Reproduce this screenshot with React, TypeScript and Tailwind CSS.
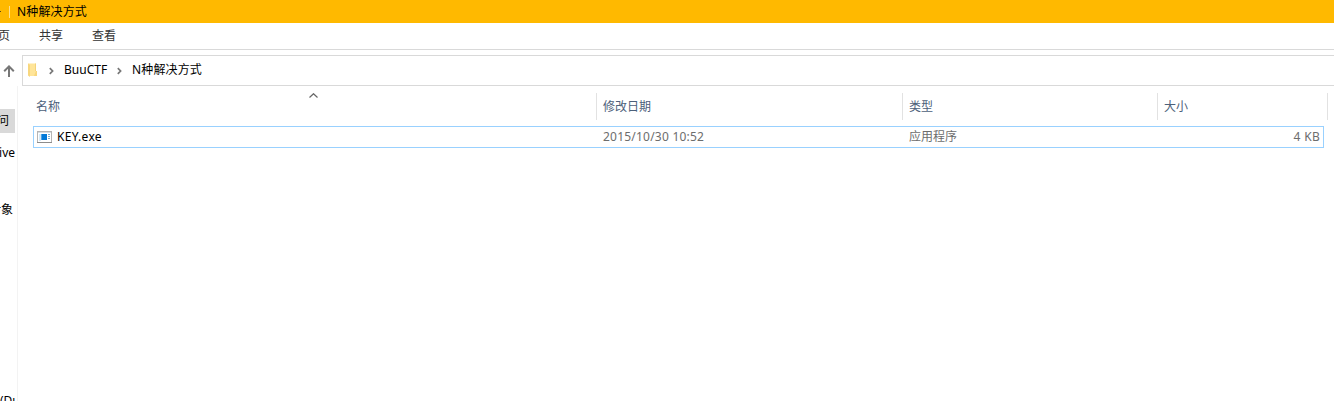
import React from 'react';

function Crumb() {
  return (
    <svg width="5" height="8" viewBox="0 0 5 8" className="shrink-0" fill="none" stroke="#777" strokeWidth="1.7">
      <path d="M0.8 1.2 L3.6 4 L0.8 6.8" />
    </svg>
  );
}

function TitleBar() {
  return (
    <header className="flex h-[23px] items-center bg-[#ffb900]">
      <div className="h-px w-px bg-[#5e4a13]" />
      <div className="ml-2 h-3 w-px bg-[#ffdf8c]" />
      <span className="ml-[7px] leading-[23px] tracking-[0.15px]">N种解决方式</span>
    </header>
  );
}

function Ribbon() {
  return (
    <nav className="flex h-[27px] border-b border-[#d9d9d9] leading-[25px] text-[#333]">
      <span className="-ml-[2px] w-[41px]">页</span>
      <span className="w-[53px]">共享</span>
      <span>查看</span>
    </nav>
  );
}

function AddressBar() {
  return (
    <div className="flex h-9 pt-[5px]">
      <div className="flex w-[22px] shrink-0 items-center pl-[3px]">
        <svg width="12" height="12" viewBox="0 0 12 12" fill="none" stroke="#777" strokeWidth="2">
          <path d="M6 12V1.5M1.2 6.2L6 1.4L10.8 6.2" />
        </svg>
      </div>
      <div className="flex h-[31px] flex-1 items-center border border-r-0 border-[#d9d9d9] pl-[5px]">
        <svg width="10" height="14" viewBox="0 0 10 14" className="mb-px shrink-0">
          <path d="M0 0.5H8V8H9V13H2L0 12Z" fill="#ffe599" />
          <path d="M0 0.5L2 2V14L0 12.5Z" fill="#f8d77e" />
          <path d="M7 0.5H8V8H7Z" fill="#f3d37c" />
          <path d="M8 8H9V13H6Z" fill="#f8d77e" />
        </svg>
        <span className="ml-[11px] flex"><Crumb /></span>
        <span className="mb-px ml-[10px] w-[53px] leading-[28px]">BuuCTF</span>
        <Crumb />
        <span className="mb-px ml-[10px] leading-[28px] tracking-[0.15px]">N种解决方式</span>
      </div>
    </div>
  );
}

function Sidebar() {
  return (
    <aside className="w-[18px] shrink-0 overflow-hidden border-r border-[#f3f3f3] pt-[23px]">
      <div className="flex h-6 w-[15px] justify-end overflow-hidden bg-[#d9d9d9] pr-[6px] leading-[23px]">
        <span>问</span>
      </div>
      <div className="mt-2 flex h-6 w-[15px] justify-end whitespace-nowrap leading-6">ive</div>
      <div className="mt-[33px] flex h-6 w-[13px] justify-end whitespace-nowrap leading-6">对象</div>
      <div className="mt-[167px] h-6 w-[15px] overflow-hidden whitespace-nowrap leading-6">(Du</div>
    </aside>
  );
}

function FileList() {
  return (
    <main className="flex-1 pt-[7px]">
      <div className="flex h-[27px] leading-[27px] text-[#4c607a]">
        <div className="relative w-[579px] border-r border-[#e2e2e2] pl-[18px]">
          名称
          <svg className="absolute left-[291px] top-0" width="9" height="5" viewBox="0 0 9 5" fill="none" stroke="#666" strokeWidth="1.2">
            <path d="M0.5 4.5L4.5 0.7L8.5 4.5" />
          </svg>
        </div>
        <div className="w-[306px] border-r border-[#e2e2e2] pl-[6px]">修改日期</div>
        <div className="w-[255px] border-r border-[#e2e2e2] pl-[6px]">类型</div>
        <div className="w-[170px] border-r border-[#e2e2e2] pl-[6px]">大小</div>
      </div>
      <div className="ml-[15px] mt-[6px] flex h-[22px] w-[1291px] border border-[#99d1ff] leading-5 text-[#6d6d6d]">
        <div className="flex w-[569px] items-center pl-[3px] text-black">
          <svg width="15" height="12" viewBox="0 0 15 12" className="shrink-0" shapeRendering="crispEdges">
            <path d="M0 0H15V12H0Z" fill="#b5b5b5" />
            <path d="M0 11H15V12H0Z" fill="#8c8c8c" />
            <path d="M1 1H14V11H1Z" fill="#fff" />
            <path d="M1 1H14V2H1Z" fill="#d5dde3" />
            <path d="M2 3H4V10H2Z" fill="#d5e9f6" />
            <path d="M5 3H10V9H5Z" fill="#0078d7" />
            <path d="M4 3H5V9H4Z" fill="#4ba2e6" />
            <path d="M11 3H13V4H11ZM11 5H13V6H11ZM11 7H13V8H11Z" fill="#72aed8" />
          </svg>
          <span className="ml-[5px] tracking-[0.3px]">KEY.exe</span>
        </div>
        <span className="w-[306px] tracking-[0.22px]">2015/10/30 10:52</span>
        <span className="flex-1">应用程序</span>
        <span className="pr-[3px] tracking-[0.3px]">4 KB</span>
      </div>
    </main>
  );
}

export default function App() {
  return (
    <div className="flex h-[401px] w-[1334px] flex-col overflow-hidden bg-white font-['Noto_Sans','Noto_Sans_CJK_SC',sans-serif] text-[12px] text-black">
      <TitleBar />
      <Ribbon />
      <AddressBar />
      <div className="flex min-h-0 flex-1">
        <Sidebar />
        <FileList />
      </div>
    </div>
  );
}
